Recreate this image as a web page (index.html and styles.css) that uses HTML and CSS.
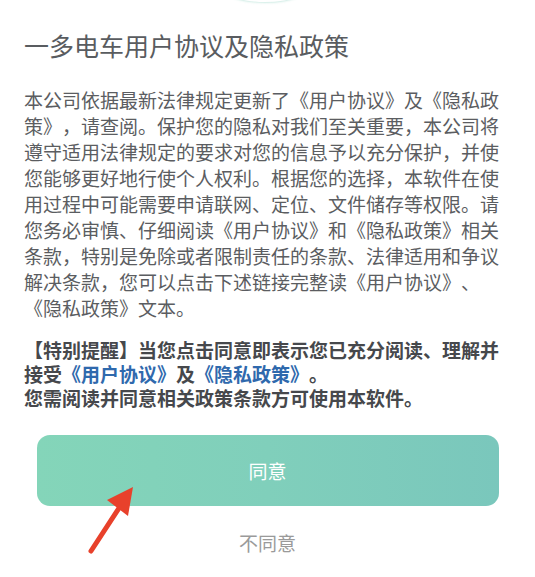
FILE: index.html
```html
<!DOCTYPE html>
<html lang="zh-CN">
<head>
<meta charset="utf-8">
<title>一多电车用户协议及隐私政策</title>
<link rel="stylesheet" href="styles.css">
</head>
<body>
<div class="page">
  <div class="logo-edge"></div>
  <div class="sheet">
    <h1 class="title">一多电车用户协议及隐私政策</h1>
    <p class="body">本公司依据最新法律规定更新了《用户协议》及《隐私政策》，请查阅。保护您的隐私对我们至关重要，本公司将遵守适用法律规定的要求对您的信息予以充分保护，并使您能够更好地行使个人权利。根据您的选择，本软件在使用过程中可能需要申请联网、定位、文件储存等权限。请您务必审慎、仔细阅读《用户协议》和《隐私政策》相关条款，特别是免除或者限制责任的条款、法律适用和争议解决条款，您可以点击下述链接完整读《用户协议》、《隐私政策》文本。</p>
    <p class="notice">【特别提醒】当您点击同意即表示您已充分阅读、理解并接受<span class="link">《用户协议》</span>及<span class="link">《隐私政策》</span>。<br>您需阅读并同意相关政策条款方可使用本软件。</p>
    <div class="actions">
      <button class="agree">同意</button>
      <button class="disagree">不同意</button>
    </div>
  </div>
  <svg class="arrow" width="535" height="577" viewBox="0 0 535 577">
    <line x1="91" y1="551" x2="121" y2="505" stroke="#e8412b" stroke-width="5" stroke-linecap="round"/>
    <polygon points="133,487 107,500 128,516" fill="#e8412b"/>
  </svg>
</div>
</body>
</html>
```
FILE: styles.css
```css
html, body {
  margin: 0;
  padding: 0;
  background: #ffffff;
}
.page {
  position: relative;
  width: 535px;
  height: 577px;
  overflow: hidden;
  font-family: "Noto Sans CJK SC", "Noto Sans", sans-serif;
  text-spacing-trim: space-all;
  font-feature-settings: "halt" 0, "chws" 0;
}
.logo-edge {
  position: absolute;
  left: 215px;
  top: -40px;
  width: 100px;
  height: 42px;
  border-radius: 50%;
  box-shadow: 0 1px 2px rgba(120, 200, 180, 0.35);
}
.sheet {
  padding: 27px 24px 0;
}
.title {
  margin: 0;
  font-size: 25px;
  line-height: 36px;
  font-weight: 400;
  color: #595c60;
}
.body {
  margin: 24px 0 0;
  font-size: 19px;
  line-height: 26px;
  color: #5b5d61;
}
.notice {
  margin: 17px 0 0;
  font-size: 19px;
  line-height: 24px;
  font-weight: 700;
  color: #46484c;
}
.link {
  display: inline-block;
  line-height: 24px;
  color: #2f69ad;
}
.actions {
  display: flex;
  flex-direction: column;
  align-items: center;
  margin-top: 25px;
}
.agree {
  width: 462px;
  height: 71px;
  border: none;
  border-radius: 13px;
  background: linear-gradient(90deg, #84d5b9 0%, #80cfbb 50%, #7ac7bc 100%);
  color: #ffffff;
  font-family: inherit;
  font-size: 19px;
  padding: 0;
}
.disagree {
  margin-top: 25px;
  border: none;
  background: none;
  padding: 0;
  font-family: inherit;
  font-size: 19px;
  line-height: 24px;
  color: #9a9a9a;
}
.arrow {
  position: absolute;
  left: 0;
  top: 0;
  pointer-events: none;
}
```
